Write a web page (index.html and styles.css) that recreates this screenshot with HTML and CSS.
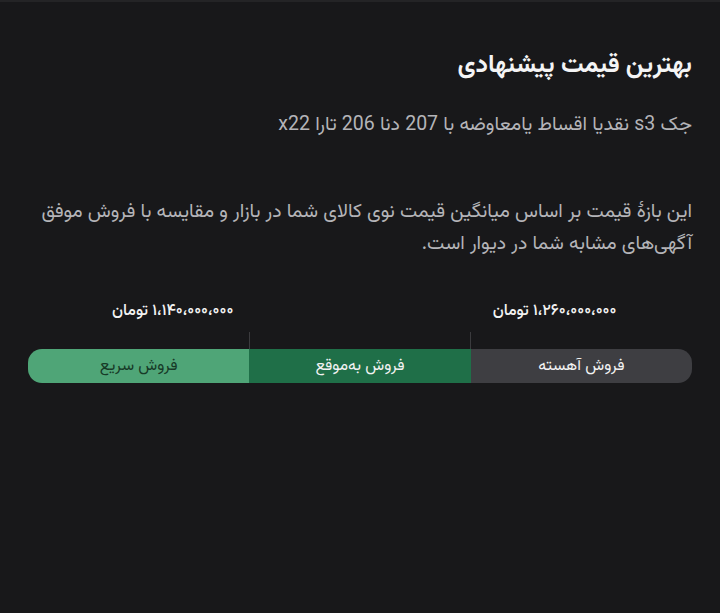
FILE: index.html
```html
<!DOCTYPE html>
<html lang="fa" dir="rtl">
<head>
<meta charset="utf-8">
<link rel="stylesheet" href="styles.css">
</head>
<body>
<div class="topbar"></div>
<main class="page">
  <h1 class="title">بهترین قیمت پیشنهادی</h1>
  <p class="subtitle">جک s3 نقدیا اقساط یامعاوضه با 207 دنا 206 تارا x22</p>
  <p class="desc">این بازهٔ قیمت بر اساس میانگین قیمت نوی کالای شما در بازار و مقایسه با فروش موفق آگهی‌های مشابه شما در دیوار است.</p>
  <section class="range">
    <div class="labels">
      <span class="label label-high">۱،۲۶۰،۰۰۰،۰۰۰ تومان</span>
      <span class="label-gap"></span>
      <span class="label label-low">۱،۱۴۰،۰۰۰،۰۰۰ تومان</span>
    </div>
    <div class="ticks">
      <span></span><span class="tick-mid"></span><span></span>
    </div>
    <div class="bar">
      <div class="seg seg-slow">فروش آهسته</div>
      <div class="seg seg-ok">فروش به‌موقع</div>
      <div class="seg seg-fast">فروش سریع</div>
    </div>
  </section>
</main>
</body>
</html>
```
FILE: styles.css
```css
html, body {
  margin: 0;
  padding: 0;
  background: #18181a;
  height: 100%;
}
body {
  font-family: "Vazirmatn", "Noto Sans Arabic", "DejaVu Sans", sans-serif;
  color: #ffffff;
}
.topbar {
  height: 2px;
  background: #242426;
}
.page {
  padding: 0 28px 0 28px;
}
.title {
  margin: 0;
  padding-top: 44px;
  font-size: 25px;
  font-weight: bold;
  line-height: 40px;
  color: #f4f4f5;
}
.subtitle {
  margin: 24px 0 0 0;
  font-size: 19.5px;
  line-height: 30px;
  color: #b4b4b8;
}
.desc {
  margin: 56px 0 0 0;
  font-size: 19.4px;
  line-height: 32px;
  color: #b4b4b8;
}
.range {
  margin-top: 38px;
}
.labels {
  display: grid;
  grid-template-columns: 1fr 1fr 1fr;
  height: 26px;
  align-items: center;
}
.label {
  font-size: 16px;
  font-weight: 500;
  color: #f2f2f2;
  white-space: nowrap;
}
.label-high {
  justify-self: end;
  margin-left: 22px;
}
.label-low {
  justify-self: start;
  margin-right: 16px;
}
.ticks {
  display: grid;
  grid-template-columns: 1fr 1fr 1fr;
  height: 17px;
  margin-top: 8px;
}
.tick-mid {
  border-left: 1px solid #3b3b3e;
  border-right: 1px solid #3b3b3e;
}
.bar {
  display: grid;
  grid-template-columns: 1fr 1fr 1fr;
  height: 34px;
  border-radius: 14px;
  overflow: hidden;
}
.seg {
  display: flex;
  align-items: center;
  justify-content: center;
  font-size: 16px;
}
.seg-slow {
  background: #3e3e42;
  color: #f2f2f2;
}
.seg-ok {
  background: #1f6f48;
  color: #f2f2f2;
}
.seg-fast {
  background: #4fa577;
  color: #173a27;
}
```
